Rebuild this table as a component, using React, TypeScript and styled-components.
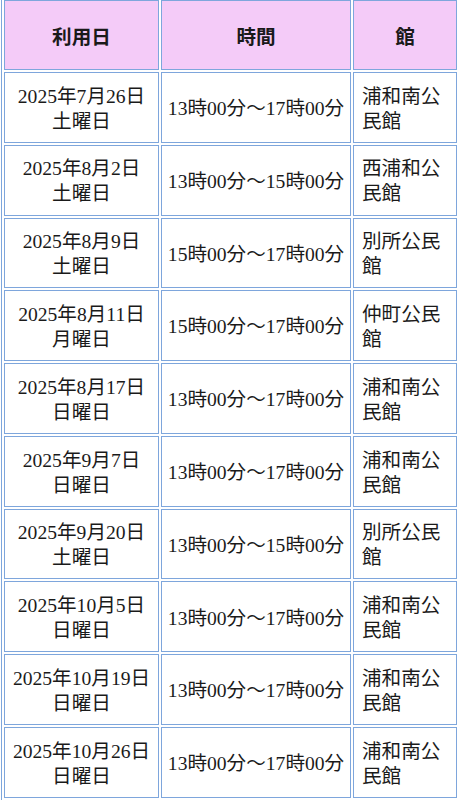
import styled, { createGlobalStyle } from 'styled-components';

type Reservation = {
  date: string;
  weekday: string;
  time: string;
  hall: string;
};

const reservations: Reservation[] = [
  { date: '2025年7月26日', weekday: '土曜日', time: '13時00分～17時00分', hall: '浦和南公民館' },
  { date: '2025年8月2日', weekday: '土曜日', time: '13時00分～15時00分', hall: '西浦和公民館' },
  { date: '2025年8月9日', weekday: '土曜日', time: '15時00分～17時00分', hall: '別所公民館' },
  { date: '2025年8月11日', weekday: '月曜日', time: '15時00分～17時00分', hall: '仲町公民館' },
  { date: '2025年8月17日', weekday: '日曜日', time: '13時00分～17時00分', hall: '浦和南公民館' },
  { date: '2025年9月7日', weekday: '日曜日', time: '13時00分～17時00分', hall: '浦和南公民館' },
  { date: '2025年9月20日', weekday: '土曜日', time: '13時00分～15時00分', hall: '別所公民館' },
  { date: '2025年10月5日', weekday: '日曜日', time: '13時00分～17時00分', hall: '浦和南公民館' },
  { date: '2025年10月19日', weekday: '日曜日', time: '13時00分～17時00分', hall: '浦和南公民館' },
  { date: '2025年10月26日', weekday: '日曜日', time: '13時00分～17時00分', hall: '浦和南公民館' },
];

const App = () => {
  return (
    <>
      <GlobalStyle />
      <Page>
        <ScheduleTable>
          <colgroup>
            <col style={{ width: 155 }} />
            <col style={{ width: 190 }} />
            <col style={{ width: 104 }} />
          </colgroup>
          <thead>
            <tr>
              <HeadCell>利用日</HeadCell>
              <HeadCell>時間</HeadCell>
              <HeadCell>館</HeadCell>
            </tr>
          </thead>
          <tbody>
            {reservations.map((r) => (
              <tr key={r.date}>
                <Cell align="center">
                  {r.date}
                  <br />
                  {r.weekday}
                </Cell>
                <Cell align="center">{r.time}</Cell>
                <Cell align="left">{r.hall}</Cell>
              </tr>
            ))}
          </tbody>
        </ScheduleTable>
      </Page>
    </>
  );
};

const GlobalStyle = createGlobalStyle`
  body {
    margin: 0;
    background: #ffffff;
    font-family: "Liberation Serif", "Noto Sans CJK JP", serif;
    color: #1a1a1a;
  }
`;

const Page = styled.div`
  padding-left: 1px;
  overflow: hidden;
`;

const ScheduleTable = styled.table`
  margin-top: -3px;
  width: 457px;
  table-layout: fixed;
  border: 1px solid #7ea6dc;
  border-spacing: 2px;
  font-size: 19.6px;
  line-height: 25px;
`;

const HeadCell = styled.th`
  height: 25px;
  padding: 24px 4px 19px;
  background: #f4cbf8;
  border: 1px solid #7ea6dc;
  font-weight: 700;
  text-align: center;
  vertical-align: middle;
`;

const Cell = styled.td<{ align: 'left' | 'center' }>`
  padding: 10.6px ${({ align }) => (align === 'left' ? '8px' : '1px')} 8.2px;
  border: 1px solid #7ea6dc;
  text-align: ${({ align }) => align};
  vertical-align: middle;
  white-space: ${({ align }) => (align === 'left' ? 'normal' : 'nowrap')};
`;

export default App;
